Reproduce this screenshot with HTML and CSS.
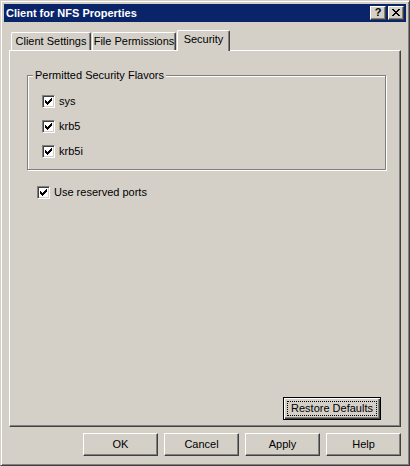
FILE: index.html
```html
<!DOCTYPE html>
<html>
<head>
<meta charset="utf-8">
<link rel="stylesheet" href="styles.css">
</head>
<body>
<div class="window">
  <div class="titlebar">
    <span class="title">Client for NFS Properties</span>
    <div class="tbtns">
      <div class="tbtn help">?</div>
      <div class="tbtn close">
        <svg width="8" height="7" viewBox="0 0 8 7" shape-rendering="crispEdges"><path d="M0 0h2v1h-2z M6 0h2v1h-2z M1 1h2v1h-2z M5 1h2v1h-2z M2 2h4v1h-4z M3 3h2v1h-2z M2 4h4v1h-4z M1 5h2v1h-2z M5 5h2v1h-2z M0 6h2v1h-2z M6 6h2v1h-2z" fill="#000"/></svg>
      </div>
    </div>
  </div>
  <div class="content">
    <div class="tabs">
      <div class="tab tab-client">Client Settings</div>
      <div class="tab tab-perm">File Permissions</div>
      <div class="tab tab-sec active">Security</div>
    </div>
    <div class="panel">
      <div class="group">
        <div class="group-label">Permitted Security Flavors</div>
        <div class="group-items">
          <div class="check"><span class="box"><svg width="7" height="7" viewBox="0 0 7 7" shape-rendering="crispEdges"><path d="M0 2H1V3H2V4H3V3H4V2H5V1H6V0H7V3H6V4H5V5H4V6H3V7H2V6H1V5H0Z" fill="#000"/></svg></span><span>sys</span></div>
          <div class="check"><span class="box"><svg width="7" height="7" viewBox="0 0 7 7" shape-rendering="crispEdges"><path d="M0 2H1V3H2V4H3V3H4V2H5V1H6V0H7V3H6V4H5V5H4V6H3V7H2V6H1V5H0Z" fill="#000"/></svg></span><span>krb5</span></div>
          <div class="check"><span class="box"><svg width="7" height="7" viewBox="0 0 7 7" shape-rendering="crispEdges"><path d="M0 2H1V3H2V4H3V3H4V2H5V1H6V0H7V3H6V4H5V5H4V6H3V7H2V6H1V5H0Z" fill="#000"/></svg></span><span>krb5i</span></div>
        </div>
      </div>
      <div class="check reserved"><span class="box"><svg width="7" height="7" viewBox="0 0 7 7" shape-rendering="crispEdges"><path d="M0 2H1V3H2V4H3V3H4V2H5V1H6V0H7V3H6V4H5V5H4V6H3V7H2V6H1V5H0Z" fill="#000"/></svg></span><span>Use reserved ports</span></div>
      <div class="spacer"></div>
      <div class="restore-row"><div class="btn default">Restore Defaults</div></div>
    </div>
    <div class="buttons">
      <div class="btn">OK</div>
      <div class="btn">Cancel</div>
      <div class="btn">Apply</div>
      <div class="btn">Help</div>
    </div>
  </div>
</div>
</body>
</html>
```
FILE: styles.css
```css
* { box-sizing: border-box; }
html, body { margin: 0; padding: 0; }
body {
  width: 410px;
  height: 466px;
  overflow: hidden;
  background: #D4D0C8;
  font-family: "Liberation Sans", Arial, sans-serif;
  font-size: 11px;
  color: #000;
}
.window {
  width: 410px;
  height: 466px;
  background: #D4D0C8;
  border: 1px solid;
  border-color: #D4D0C8 #404040 #404040 #D4D0C8;
  box-shadow: inset 1px 1px 0 #fff, inset -1px -1px 0 #808080;
  padding: 3px;
  display: flex;
  flex-direction: column;
}
.titlebar {
  flex: none;
  height: 18px;
  background: #0A246A;
  display: flex;
  align-items: center;
  padding: 0 2px 0 2px;
}
.title {
  flex: 1;
  color: #fff;
  font-weight: bold;
  line-height: 13px;
  white-space: nowrap;
}
.tbtns { display: flex; gap: 2px; }
.tbtn {
  width: 16px;
  height: 14px;
  background: #D4D0C8;
  border: 1px solid;
  border-color: #fff #404040 #404040 #fff;
  box-shadow: inset -1px -1px 0 #808080;
  display: flex;
  align-items: center;
  justify-content: center;
}
.tbtn.help {
  font-weight: bold;
  font-size: 11px;
  line-height: 11px;
  padding-bottom: 1px;
}
.tbtn.close svg { display: block; margin-bottom: 1px; }
.content {
  flex: 1;
  display: flex;
  flex-direction: column;
  padding: 8px 5px 6px 5px;
}
.tabs {
  flex: none;
  height: 20px;
  display: flex;
  align-items: flex-end;
  padding-left: 2px;
  position: relative;
  z-index: 1;
}
.tab {
  height: 18px;
  background: #D4D0C8;
  border-top: 1px solid #fff;
  border-left: 1px solid #fff;
  border-right: 1px solid #404040;
  box-shadow: inset -1px 0 0 #808080;
  border-top-left-radius: 2px;
  border-top-right-radius: 2px;
  padding-top: 2px;
  line-height: 13px;
  text-align: center;
  white-space: nowrap;
}
.tab-client { width: 80px; }
.tab-perm { width: 84px; margin-left: 1px; }
.tab-sec { width: 53px; margin-left: 1px; }
.tab.active {
  height: 21px;
  margin-bottom: -1px;
}
.panel {
  flex: 1;
  display: flex;
  flex-direction: column;
  border: 1px solid;
  border-color: #fff #404040 #404040 #fff;
  box-shadow: inset -1px -1px 0 #808080;
  padding: 24px 0 0 17px;
}
.group {
  position: relative;
  width: 359px;
  height: 95px;
  border: 1px solid #808080;
  box-shadow: 1px 1px 0 #fff, inset 1px 1px 0 #fff;
}
.group-label {
  position: absolute;
  left: 5px;
  top: -7px;
  padding: 0 2px;
  background: #D4D0C8;
  line-height: 13px;
  white-space: nowrap;
}
.group-items {
  display: flex;
  flex-direction: column;
  gap: 12px;
  padding: 19px 0 0 14px;
}
.check {
  display: flex;
  align-items: center;
  gap: 4px;
  line-height: 13px;
  white-space: nowrap;
}
.box {
  flex: none;
  width: 13px;
  height: 13px;
  background: #fff;
  border: 1px solid;
  border-color: #808080 #fff #fff #808080;
  box-shadow: inset 1px 1px 0 #404040, inset -1px -1px 0 #D4D0C8;
  display: flex;
  align-items: center;
  justify-content: center;
}
.box svg { display: block; }
.reserved {
  margin-top: 16px;
  margin-left: 10px;
}
.spacer { flex: 1; }
.restore-row {
  display: flex;
  justify-content: flex-end;
  padding: 0 19px 6px 0;
}
.btn {
  height: 23px;
  width: 75px;
  background: #D4D0C8;
  border: 1px solid;
  border-color: #fff #404040 #404040 #fff;
  box-shadow: inset -1px -1px 0 #808080;
  display: flex;
  align-items: center;
  justify-content: center;
  line-height: 13px;
  white-space: nowrap;
}
.btn.default {
  position: relative;
  width: 98px;
  border: 1px solid #000;
  box-shadow: inset 1px 1px 0 #fff, inset -1px -1px 0 #404040, inset -2px -2px 0 #808080;
}
.btn.default::after {
  content: "";
  position: absolute;
  left: 3px;
  top: 3px;
  right: 3px;
  bottom: 3px;
  border: 1px dotted #000;
}
.buttons {
  flex: none;
  display: flex;
  justify-content: flex-end;
  gap: 6px;
  margin-top: 6px;
}
```
